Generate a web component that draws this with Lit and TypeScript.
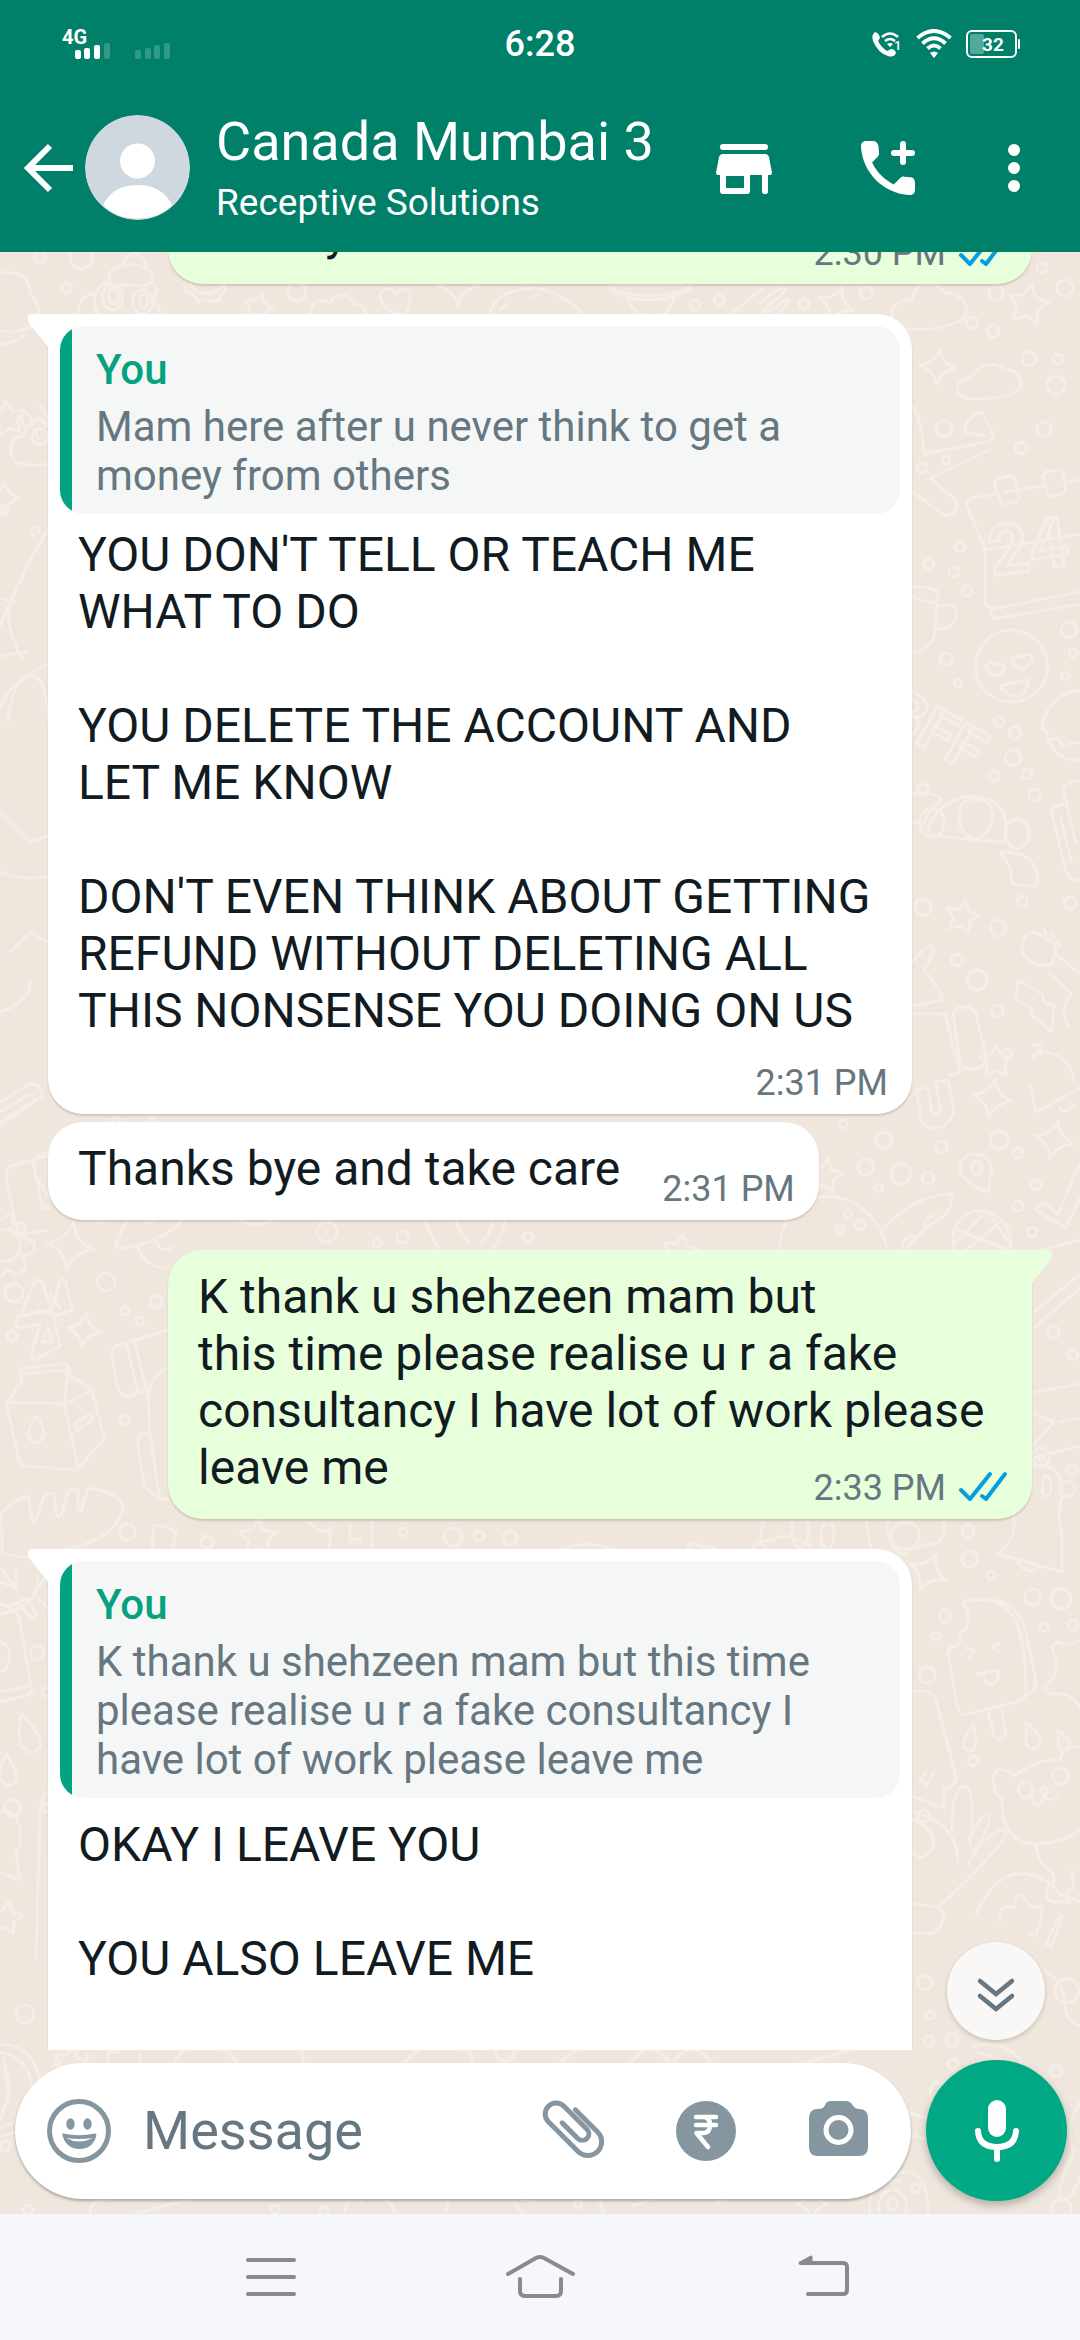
import { LitElement, html, svg, css, nothing } from "lit";
import { customElement, property } from "lit/decorators.js";
import { classMap } from "lit/directives/class-map.js";

interface Quote {
  author: string;
  text: string;
}

interface Message {
  text: string;
  out?: boolean;
  tail?: boolean;
  wide?: boolean;
  first?: boolean;
  time?: string;
  quote?: Quote;
  meta?: "inline" | "corner" | "below";
}

const MESSAGES: Message[] = [
  { text: "usually", out: true, wide: true, time: "2:30 PM", meta: "corner" },
  {
    text: "YOU DON'T TELL OR TEACH ME WHAT TO DO\n\nYOU DELETE THE ACCOUNT AND LET ME KNOW\n\nDON'T EVEN THINK ABOUT GETTING REFUND WITHOUT DELETING ALL THIS NONSENSE YOU DOING ON US",
    tail: true,
    wide: true,
    first: true,
    time: "2:31 PM",
    meta: "below",
    quote: { author: "You", text: "Mam here after u never think to get a money from others" },
  },
  { text: "Thanks bye and take care", time: "2:31 PM", meta: "inline" },
  {
    text: "K thank u shehzeen mam but\nthis time please realise u r a fake consultancy I have lot of work please leave me",
    out: true,
    tail: true,
    wide: true,
    first: true,
    time: "2:33 PM",
    meta: "corner",
  },
  {
    text: "OKAY I LEAVE YOU\n\nYOU ALSO LEAVE ME\n\n\n",
    tail: true,
    wide: true,
    first: true,
    quote: {
      author: "You",
      text: "K thank u shehzeen mam but this time please realise u r a fake consultancy I have lot of work please leave me",
    },
  },
];

/* Wallpaper: small rings as [x, y, r]; y is measured from the bottom of the header. */
const RINGS: number[][] = [
  [40, 5, 6], [81, 6, 11], [67, 36, 5], [297, 40, 9], [695, 53, 5], [719, 48, 5], [866, 41, 6], [804, 52, 5],
  [1042, 16, 5], [1065, 36, 8], [996, 41, 7], [972, 71, 6], [993, 79, 6], [1029, 107, 7], [1058, 107, 5],
  [1056, 133, 9], [944, 177, 8], [1044, 177, 7], [1021, 196, 6], [922, 216, 5], [946, 208, 4], [960, 295, 5],
  [929, 312, 5], [954, 320, 5], [967, 339, 5], [1069, 378, 8], [946, 407, 6], [1073, 401, 4], [958, 431, 4],
  [1065, 424, 4], [999, 470, 5], [1015, 481, 6], [1013, 506, 8], [994, 524, 5], [1027, 522, 5], [1035, 543, 6],
  [923, 537, 5], [1022, 649, 5], [923, 655, 8], [1070, 651, 6], [998, 676, 8], [957, 708, 6], [977, 728, 10],
  [997, 759, 6], [1007, 802, 5], [40, 185, 8], [3, 258, 5], [35, 279, 4], [843, 872, 4], [884, 888, 8],
  [999, 888, 9], [941, 895, 6], [866, 915, 8], [901, 922, 10], [928, 926, 6], [1018, 901, 5], [1036, 933, 5],
  [879, 936, 4], [1018, 954, 5], [848, 962, 4], [860, 973, 5], [840, 977, 4], [1032, 980, 5], [1053, 1080, 6],
  [1073, 1103, 5], [1072, 1218, 5], [1067, 1237, 8], [327, 980, 10], [403, 985, 6], [377, 991, 4], [528, 985, 5],
  [100, 966, 5], [106, 1030, 9], [14, 1041, 9], [156, 1050, 6], [125, 1059, 4], [140, 1069, 4], [12, 1084, 5],
  [125, 1168, 5], [127, 1280, 8], [207, 1290, 6], [403, 1280, 4], [453, 1285, 9], [479, 1284, 5], [510, 1286, 7],
  [968, 1279, 6], [970, 1307, 8], [991, 1323, 4], [37, 1401, 7], [46, 1440, 4], [46, 1556, 4], [1033, 1345, 8],
  [1061, 1347, 10], [945, 1364, 6], [936, 1384, 4], [1044, 1375, 4], [1073, 1373, 5], [927, 1423, 8],
  [973, 1509, 5], [924, 1564, 6], [925, 1731, 7], [1067, 1739, 12], [930, 1763, 4], [929, 1789, 5],
  [952, 1788, 6], [25, 1762, 9], [5, 1894, 5], [953, 1812, 5], [1056, 1819, 6], [578, 1952, 4], [1061, 1957, 10],
  [28, 1958, 5], [275, 1957, 4], [324, 1959, 4], [505, 1800, 9], [916, 1936, 4], [116, 869, 4], [152, 869, 4],
];

/* Four-pointed sparkles and five-pointed stars as [x, y, size, turn]. */
const SPARKS: number[][] = [
  [938, 115, 18, 5], [992, 846, 20, 10], [1054, 888, 20, 12], [70, 994, 24, 8], [84, 1078, 17, 8],
  [928, 1320, 20, 25], [458, 34, 20, 0], [4, 246, 16, 0], [812, 1952, 16, 0], [836, 52, 18, 20],
];
const STARS: number[][] = [
  [258, 56, 15, 15], [1028, 53, 21, 10], [962, 665, 17, 12], [258, 1286, 19, 0], [825, 924, 18, 10],
  [680, 1000, 18, 10], [8, 167, 18, -8], [6, 1666, 17, 10], [996, 810, 17, 0], [70, 1812, 18, 10],
];

const starPath = (r: number) => {
  const points: string[] = [];
  for (let i = 0; i < 10; i++) {
    const radius = i % 2 ? r * 0.52 : r;
    const a = (Math.PI / 5) * i - Math.PI / 2;
    points.push(`${(Math.cos(a) * radius).toFixed(1)} ${(Math.sin(a) * radius).toFixed(1)}`);
  }
  return `M${points.join("L")}Z`;
};

const sparkPath = (r: number) => {
  const q = r * 0.2;
  return `M0 ${-r}Q${q} ${-q} ${r} 0Q${q} ${q} 0 ${r}Q${-q} ${q} ${-r} 0Q${-q} ${-q} 0 ${-r}Z`;
};

const DOODLES: string[] = [
  // clouds
  "M0 21q30-4 30 20q14 16 6 30q-16 12-36 8",
  "M962 144c-10-6-2-20 10-18c4-14 24-18 32-8c14-2 22 14 14 20c-8 8-46 12-56 6z",
  "M900 76c-16-10-8-30 12-28c2-20 26-20 34-6c14-4 28 16 16 26q-30 14-62 8z",
  "M310 64c0-14 12-20 20-12c6-14 22-10 24 0c10 0 14 8 12 16",
  "M16 210c-10-12-4-26 8-26c2-20 22-20 30-8M16 210q16 6 32 2",
  // swirl character with two eyes
  "M122 14q4-10 12-14q12 6 12 16M122 14q12-4 24 2M112 34c-8-10 2-22 12-20M146 16c10 6 8 16-4 18q-20-2-34 0M98 62c-8-12-2-30 12-32M78 62c0-14 8-20 18-20M152 30q10 10-2 18q12 6 10 16",
  "M112 32a10 13 0 1 0 1 0zM113 36a5 8 0 1 0 1 0zM142 38a10 12 0 1 0 1 0zM143 42a4 7 0 1 0 1 0z",
  // gear
  "M184 32q4 14 8 8l6 10q8-4 14 0l8-2q0-8 6-8l-2-8M190 32q16 20 34 0",
  // heart, ringed planet, scribble
  "M380 42c6-8 14-6 16 0c6-8 16-6 14 4q0 10-6 18q-24-6-24-22z",
  "M609 33c10 14 70 14 82 0M612 38c14 14 66 12 78-2M628 48q8 18 24 18t22-20M614 32l70 0",
  "M732 62l30-26M760 52q14-14 22-16t-4 10q-16 12-14 14t18-10q10-6 4 4l-16 16",
  "M490 62q4-22 40-26q24 0 52 24M500 58l6-6M530 46l8-4",
  // brush and marker
  "M912 154q10 12 12 48l62-12q12-4 4-14l-8-16q-16 4-18 20l20 4M912 240l34 24q14-4 10-16l-26-22l60-28",
  // calendar
  "M1080 228l-14 2M1043 234l-38 6M995 242l-22 4q-8 4-6 8l18 42v54q2 8 12 6l83-16M985 298l95-16M992 354q-4 14 6 12l82-14",
  "M997 227l14-3q4 0 5 5l3 16q0 4-4 5l-10 2q-4 0-5-4l-5-16q-1-4 2-5zM1046 220l12-2q4 0 5 5l3 14q0 4-4 5l-10 2q-4 0-5-4l-4-14q-1-4 3-6z",
  // cup
  "M912 335q28 0 26 8l-4 42q-6 14-22 16M938 354q20-4 18 8q-2 18-20 14M912 344q16 8 24 6",
  // heart-eyed face
  "M1011 378a36 36 0 1 0 1 0zM986 414c4-6 8-4 8 0c4-4 12-2 10 4l-6 6q-10-2-12-10zM1012 408c4-6 8-4 10-2c4-6 12-4 10 2l-8 10q-10-2-12-10zM1000 434q16-4 28-6q0 14-10 16t-18-10z",
  // cookie
  "M1080 438q-32 4-38 38q8 4 6 14q6-6 12-2q2 10 10 4l10-2M1048 488q10 22 32 20",
  // group of people
  "M975 547q18 0 17 18t-17 22q-16-4-16-22t16-18zM932 556q12 2 12 14t-12 16q-12-4-12-16t12-14zM1017 567q12 2 12 14t-12 16q-12-4-12-16t12-14z",
  "M928 582c4-44 78-54 78-6q2 14-6 14l-66-6q-6 0-6-2zM912 542q26-2 30 6q-14 8-18 24l-12-2M1000 600q34-2 38 26q0 10-8 8l-18-2q0-20-12-32z",
  // paper clips
  "M1080 528q-18 2-16 12l12 52M1064 552q-14 2-12 10l14 58q8 12 14 6M1060 564l12 48",
  "M0 850l30-18q14 0 12 12l-42 30M0 860l26-16q8-4 8 4l-34 22",
  // toothbrush and spark
  "M1022 700q0-20 12-20q20 8 22 18l-4 14q-20 6-30-12zM1056 702l24 20M1048 720l24 22q-14 14-4 32M1044 676l2 6M1052 680l2 6M1056 690l4 4",
  "M1018 728l24 14l2 8l10 4l-2 26l-22-18l2-6l-16-8z",
  // bottle and tag
  "M958 756q14-4 18 6l10 42q0 12-8 12q-14 4-18-6l-6-42q-2-10 4-12zM912 710q10-12 18-16q8 2-6 24q16 18 18 30l-30 6M912 762h30q4 0 4 4l14 54l-12 4",
  // upper right bell
  "M1040 802q2-14-6-8M1034 808q-2-10 10-8q28 4 30 30M1030 832l6 28l44-24M1060 856q6 8 14-4",
  // magnet
  "M916 838l12-2l4 24q6 4 8-2l-4-28l12-2l6 30q-4 18-20 18q-16 0-14-18z",
  // pin
  "M966 928c-12-12-4-26 8-26c16 0 20 12 16 24l-2 14q-14-4-22-12zM976 910a5 6 0 1 0 1 0z",
  // tick
  "M1036 958l4-6q4-2 6 0l12 10l22-50M1036 958l30 18l14-30",
  // ball
  "M954 998c-10-52 60-52 57 0M982 964l-28 28M990 962l20 30M958 978l50 20M1000 970l-34 28",
  // half biscuit and carrot
  "M779 998c4-70 90-72 108-2M880 982q30-38 70-40q6 2-4 20q-30 20-40 36M902 998q0-14 12-14M926 974q-4-8 6-10",
  // plane
  "M116 990l18-36M116 990q0 8 8 6q40-6 60-30l44-24M146 966l24-10q6-2 4 4l-22 10q-8 2-6-4zM138 996q8 20 30 20M156 988q4 16 18 6M228 954q10 20 32 18q24-4 28-22M200 946l28-8",
  // heart badge
  "M424 950q0 30 20 52M504 950q4 30-12 48M456 968c2-14 14-14 18-6c4-12 20-10 20 4q-2 14-12 24M456 968q2 10 12 22",
  // envelope and gear at the left edge
  "M48 904l-38 10q-4 4-4 12l10 48q2 10 10 8l22-4M48 900q-16 4-14 14l8 40q2 4 6 2M36 924l12 20",
  "M0 968l10-6l4 10q10-4 12 4l-4 8l12 6q2 10-4 12l-8 2l4 12q-8 10-14 4l-6-2l-4 6M2 978a14 16 0 1 1-1 30",
  // scissors
  "M34 1030q4-4 8 0l10 28l8-30q6-2 6 4l6 26l-18 6l-14-6l-14 6l-4-4zM20 1064l32-6l8 36l-26 14q-4-4-2-8l8-28l-22 4q-6-6 2-12zM50 1042l10 14M42 1090l6-14l4 14z",
  // milk carton
  "M20 1122q-2-6 4-6l40-4q6 0 6 8M20 1122l46-4l2 4l24 16l-26 14l-58-2l14-22zM6 1150l12 54q2 10 8 10l48 4q4 0 4-4l-14-62M92 1138l12 48q0 4-4 6l-24 26M68 1122l-4 30M36 1164q-8 12-8 20q8 14 16 0q0-10-8-20zM76 1170l14-8q4 0 2 6l-14 10q-4 0-2-8z",
  // bag
  "M168 1078l-52 16q-6 4-4 10l6 32q4 10 12 8l18-6M126 1090l12 50M134 1088l12 48M148 1142q4-20 20-26M148 1142l2 40l10 66M150 1182q-14-2-12 12l6 36q6 16 24 18",
  // bread
  "M2 1280q-10-24 26-36l4 24q2 8 4 0l8-24q6-4 10-2l2 20q4 6 6-2l6-20q6-4 10-2v18q4 6 4 0l6-20q40 6 34 24q-10 32-76 42q-30 6-44-2z",
  // glass and puzzle piece
  "M154 1274q10-2 22 6l-8 40M154 1274l-4 44M310 1270q10 14 20 6v16l-6 18M350 1274v16q12-8 10 2M372 1270v32l-26 6",
  // paws
  "M764 1270q-8 22 4 28M792 1270q0 24 8 26q12-8 8-26M824 1272q-8 18 4 26q10-10 4-26M745 1308q8-20 28-20q16-10 36 6M686 1300q4-14 14-6l14 2q2 12-6 14M552 1302q32-18 70-2",
  // small camera
  "M888 1270q0 34 20 32M944 1270q2 18-10 22l-34 6M905 1270a14 14 0 1 0 1 0M866 1270l8 40",
  // right side ruler and lines
  "M1034 1060l46-38M1034 1076l46-40M1034 1140l46-8M1034 1162l20 8l-20 22M1060 1170l20-4M1034 1206l46-12M1034 1000l46-12",
  // bell
  "M1040 1196a9 9 0 1 0 1 0M1040 1202a3 3 0 1 0 1 0M1026 1216q36-12 36 28q-6 20 0 40v36l-64-18q18-14 16-34t12-52zM1044 1224q10 0 6 18q-6 6-8-2zM1018 1310q8 14 20 6",
  // leaf
  "M0 1316l16 20l-12-16M16 1336l0-18M16 1336l-16-6M8 1354l20-8M28 1346l8 16q0 6-6 2l-12-12M0 1362q40-8 38-36M48 1322l-14 20l14 14",
  // oven mitt
  "M0 1352q20 4 20 20l12 66q-2 6-8 6l-24 6M0 1390q10 4 10 14q-2 14-10 16M0 1440l30-6",
  // drops
  "M22 1462q22 24 18 34q-10 10-20-4q-2-18 2-30zM7 1502q12 20 8 28q-8 8-16-4q0-14 8-24z",
  "M974 1472q-12 14-10 24q10 6 12-4zM1026 1470q16 14 14 22q-8 10-14 0zM1058 1478q14 12 12 18q-6 8-12-2zM22 157q12 8 10 16q-8 6-10-4z",
  // duck
  "M12 1548a8 8 0 1 0 1 0M0 1560q14-6 20 16q2 16-4 26l4 26l-20-8M48 1540q-8 6-8 20l-4 148",
  // ice lolly
  "M964 1352q-2-4 4-4q34-4 46 18t12 74q0 8-10 10l-48 12q-8 2-10-6l-10-54q0-8 8-8q6-6 4-14q8-2 8-12t-4-16zM996 1348q22 4 30 32l10 48q0 12-12 16M988 1461l6 22q4 8 12 0l-4-26M966 1396l10 2l-8 8M1000 1390l-8 6l8 4M976 1422l24-4M984 1420q0 14 8 12t6-14",
  // box character
  "M912 1440q20-4 24 8l20 76q0 12-12 12v20l-32-12M920 1526l6 6M926 1520l-6 12M934 1520l-8 14",
  // splash
  "M1080 1388q-14 8-22 2q-8 2-4 12q6 12-2 26q-14 10 0 14q20-2 28 14",
  // kitten
  "M1014 1524c-6-8-24-12-20 8q2 12 8 14q-2 42 30 46q30 0 48-14M1014 1524q24-18 46-16q4-18 20-12M1025 1530a7 8 0 1 0 1 0zM1060 1516a8 8 0 1 0 1 0zM1040 1538q8-6 8 2l-4 4zM1044 1544q-4 16-12 4M1044 1544q8 8 14-2M1036 1594q2 18 16 26q6 10-4 14q-6 14 6 16h16q-10-10 4-14l-2-18",
  // carrot greens
  "M912 1560q44 8 46 50M952 1578q0-44 12-44t6 60M968 1588q14-28 20-24t-20 48M972 1600q28-28 34-20q2 10-66 74M912 1652l20 2q16 2 10 16q-2 16-30 10M912 1568q20 6 22 24q-10 22-22 8",
  // cap and badge
  "M976 1662q20-44 50-40q24 4 34 20l20 8M1000 1670q-2-20 14-14q2-20 12-8q4 10 16 6q0 14-4 20q0 14-10 8M1058 1666l4-2l-10 30l-6-2zM1046 1720q18 8 20 40q4 12 14 14",
  // compass
  "M0 1792q38 2 40 44t-40 48M0 1800q30 6 32 36t-32 40M4 1806l6 34l-10 28M4 1818l4 22",
  // strip between the list and the composer
  "M54 1812l26 14l8-24M108 1812v-12h10M140 1812v-10M174 1812q8-16 20-18M222 1798q8 0 14 12M304 1812q-4-10 0-16M402 1812l16-14M462 1798q12 0 10 14M560 1812q14-20 40-16M630 1812q20-30 40 0M672 1812q20-30 40 0M800 1812l80-22",
  // under the composer
  "M90 1962q0-12 12-14l90-12q14 0 12 8l-70 18M344 1962l8-24M368 1940l-8 10M380 1946q14 4 14 16M446 1960q4-16 0-24M524 1962l-16-18l26 6M604 1962q-4-14-8-24M632 1954l40-14M716 1950l50-12M870 1962q-4-34 30-34M892 1938a14 16 0 1 0 1 0M892 1946a5 6 0 1 0 1 0M928 1962q0-40-20-42q-22 2-22 8",
  // far right near the microphone
  "M974 1794q30-8 48 16M978 1800l40 14M908 1860l30 10M930 1846q0-20 12-14q14-10 14 20M1080 1850q-16 26-6 50q-20 40-12 48q12-2 18-24M904 1884q24 0 28 8",
  // left side at the first message
  "M0 92q20-2 24-10M38 186l-4-8M40 152l8 14M42 170l8 6M0 374q30-70 48-96M0 346l14 4M12 350q-10 20 10 56M0 404l26-4M8 470q4-46 24-46q14 0 16 46M0 456q8-26 48-44M0 560l30 30l18-6M0 620q26 10 48 4M10 700l20-20l18 10M0 760q30-10 30-30",
];

@customElement("chat-wallpaper")
export class ChatWallpaper extends LitElement {
  static styles = css`
    :host { display: block; overflow: hidden; background: #efe6dd; }
    .art { display: block; width: 100%; height: 100%; }
    .lines { fill: none; stroke: #f5eee7; stroke-width: 3; stroke-linejoin: round; stroke-linecap: round; }
    .word { font-family: Roboto, sans-serif; font-weight: 700; }
  `;

  render() {
    return html`
      <svg class="art" viewBox="0 0 1080 1962" preserveAspectRatio="xMidYMin slice" aria-hidden="true">
        <g class="lines">
          ${RINGS.map(([x, y, r]) => svg`<circle cx=${x} cy=${y} r=${r} />`)}
          ${SPARKS.map(([x, y, r, t]) => svg`<path d=${sparkPath(r)} transform="translate(${x} ${y}) rotate(${t})" />`)}
          ${STARS.map(([x, y, r, t]) => svg`<path d=${starPath(r)} transform="translate(${x} ${y}) rotate(${t})" />`)}
          ${DOODLES.map((d) => svg`<path d=${d} />`)}
          <text class="word" font-size="70" transform="translate(992 324) rotate(-8)">24</text>
          <text class="word" font-size="60" transform="translate(880 470) rotate(30)">BFF</text>
        </g>
      </svg>
    `;
  }
}

@customElement("status-bar")
export class StatusBar extends LitElement {
  static styles = css`
    :host {
      display: grid;
      grid-template-columns: 1fr auto 1fr;
      align-items: center;
      height: 87px;
      padding: 0 60px;
      color: #fff;
    }
    .time { font-size: 36px; line-height: 42px; font-weight: 500; }
    .right { display: flex; justify-content: flex-end; align-items: center; gap: 14px; }
    svg { display: block; }
    .net { font: 700 20px Roboto, sans-serif; fill: #fff; }
    .charge { font: 700 19px Roboto, sans-serif; fill: #fff; }
    .sim { font: 500 13px Roboto, sans-serif; fill: #fff; }
  `;

  render() {
    return html`
      <svg width="120" height="36" viewBox="0 0 120 36" fill="#fff" role="img" aria-label="4G signal">
        <text class="net" x="2" y="18">4G</text>
        <rect x="15" y="24" width="6" height="9" rx="2" />
        <rect x="24" y="22" width="6" height="11" rx="2" />
        <rect x="34" y="19" width="6" height="14" rx="2" />
        <g opacity=".2">
          <rect x="44" y="17" width="6" height="16" rx="2" />
          <rect x="75" y="24" width="6" height="9" rx="2" />
          <rect x="85" y="22" width="6" height="11" rx="2" />
          <rect x="94" y="19" width="6" height="14" rx="2" />
          <rect x="104" y="17" width="6" height="16" rx="2" />
        </g>
      </svg>
      <span class="time">6:28</span>
      <div class="right">
        <svg width="32" height="30" viewBox="0 0 32 30" aria-hidden="true">
          <path d="M5 3Q1 6 3 12Q8 24 18 27Q24 29 26 24Q25 20 21 20L17 22Q11 18 8 12L10 9Q9 4 5 3Z" fill="#fff" />
          <path d="M12 8Q20 1 28 8M15 12Q20 8 25 12" fill="none" stroke="#fff" stroke-width="2.6" />
          <path d="M17 15Q20 13 23 15L20 18Z" fill="#fff" />
          <text class="sim" x="24" y="21">1</text>
        </svg>
        <svg width="36" height="30" viewBox="0 0 36 30" aria-hidden="true" fill="none" stroke="#fff" stroke-width="4">
          <path d="M1.500 9Q18-5 34.500 9" />
          <path d="M6.500 14.500Q18 4 29.500 14.500" />
          <path d="M11.500 19.500Q18 13.500 24.500 19.500" />
          <path d="M14 24Q18 21 22 24L18 29Z" fill="#fff" stroke="none" />
        </svg>
        <svg width="54" height="28" viewBox="0 0 54 28" role="img" aria-label="Battery 32 percent">
          <rect x="1" y="1" width="49" height="26" rx="5" fill="none" stroke="#fff" stroke-width="2" />
          <rect x="4" y="4" width="14" height="20" rx="2" fill="#fff" opacity=".32" />
          <rect x="52" y="9" width="2" height="10" rx="1" fill="#fff" />
          <text class="charge" x="16" y="21">32</text>
        </svg>
      </div>
    `;
  }
}

@customElement("chat-header")
export class ChatHeader extends LitElement {
  static styles = css`
    :host { display: flex; align-items: center; box-sizing: border-box; height: 165px; padding: 0 48px 4px 24px; color: #fff; }
    button { display: block; padding: 0; border: 0; background: none; color: inherit; }
    svg { display: block; fill: currentColor; }
    .avatar { margin: 0 26px 0 11px; border-radius: 50%; }
    .who { flex: 1; min-width: 0; display: flex; flex-direction: column; gap: 7px; }
    .name { margin: 0; font-size: 54px; line-height: 64px; font-weight: 400; white-space: nowrap; }
    .sub { margin: 0; font-size: 37px; line-height: 44px; white-space: nowrap; }
    .actions { display: flex; align-items: center; gap: 72px; }
  `;

  render() {
    return html`
      <button aria-label="Back">
        <svg width="50" height="54" viewBox="0 0 50 54">
          <path d="M26 5L4 27L26 49M4 27H49" fill="none" stroke="currentColor" stroke-width="6" />
        </svg>
      </button>
      <svg class="avatar" width="105" height="105" viewBox="0 0 105 105" role="img" aria-label="Profile photo">
        <circle cx="52.500" cy="52.500" r="52.500" fill="#cfd8df" />
        <circle cx="52.500" cy="46" r="17.500" />
        <path d="M18 90Q28 70 52.500 70T87 90Q74 103.500 52.500 103.500T18 90Z" />
      </svg>
      <div class="who">
        <h1 class="name">Canada Mumbai 3</h1>
        <p class="sub">Receptive Solutions</p>
      </div>
      <div class="actions">
        <button aria-label="Catalog">
          <svg width="72" height="72" viewBox="0 0 72 72">
            <rect x="12" y="12" width="48" height="6" rx="3" />
            <path fill-rule="evenodd" d="M15 22H57Q60 22 61 25L64 41Q64 43 62 43H60V60Q60 62 57 62T54 60V43H42V59Q42 62 39 62H15Q12 62 12 59V43H10Q8 43 8 41L11 25Q12 22 15 22ZM18 44V56H36V44Z" />
          </svg>
        </button>
        <button aria-label="Call">
          <svg width="72" height="72" viewBox="0 0 24 24">
            <path d="M19.600 15.100L17.400 14.900C16.900 14.800 16.400 15 16 15.400L13.900 17.500C10.800 15.900 8.200 13.400 6.700 10.200L8.500 8.300C8.900 7.900 9.100 7.400 9 6.900L8.800 4.700C8.700 3.700 7.900 3 6.900 3H4.600C3.700 3 3 3.800 3 4.800C3.500 13.600 10.500 20.500 19.200 21C20.200 21 21 20.300 21 19.300V17C21 16 20.500 15.200 19.600 15.100Z" />
            <path d="M17 4V10M14 7H20" fill="none" stroke="currentColor" stroke-width="2" stroke-linecap="round" />
          </svg>
        </button>
        <button aria-label="More options">
          <svg width="36" height="72" viewBox="0 0 36 72">
            <circle cx="18" cy="18" r="6" />
            <circle cx="18" cy="36" r="6" />
            <circle cx="18" cy="54" r="6" />
          </svg>
        </button>
      </div>
    `;
  }
}

@customElement("message-bubble")
export class MessageBubble extends LitElement {
  @property({ attribute: false }) message!: Message;

  static styles = css`
    :host { display: flex; flex: none; }
    .bubble {
      position: relative;
      box-sizing: border-box;
      display: flex;
      flex-direction: column;
      max-width: 864px;
      border-radius: 35px;
      background: #fff;
      color: #111b21;
      box-shadow: 0 2px 2px rgba(90, 70, 50, 0.2);
    }
    .wide { width: 864px; }
    .out { margin-left: auto; background: #e7ffdb; }
    .tail-in { border-top-left-radius: 0; }
    .tail-out { border-top-right-radius: 0; }
    .tail { position: absolute; top: 0; width: 22px; height: 35px; }
    .tail-in .tail { right: 100%; margin-right: -1px; fill: #fff; }
    .tail-out .tail { left: 100%; margin-left: -1px; fill: #e7ffdb; transform: scaleX(-1); }
    .quote {
      display: flex;
      flex-direction: column;
      gap: 8px;
      margin: 12px 12px 0;
      padding: 19px 24px 14px 36px;
      border-radius: 24px;
      background: linear-gradient(to right, #02a380 12px, #f4f7f6 12px);
      color: #667781;
      font-size: 42px;
      line-height: 49px;
    }
    .quote p { margin: 0; }
    .quote .author { color: #06a17f; font-weight: 500; }
    .body { display: grid; padding: 18px 32px 23px 30px; }
    .quote + .body { padding-top: 12px; }
    .quote + .open { padding-top: 18px; }
    .text { margin: 0; font-size: 48px; line-height: 57px; white-space: pre-wrap; }
    .meta {
      display: flex;
      align-items: center;
      gap: 12px;
      align-self: end;
      justify-self: end;
      margin: 0 -8px -13px 0;
      color: #667781;
      font-size: 36px;
      line-height: 42px;
      white-space: nowrap;
    }
    .ticks { display: block; }
    .inline { grid-template-columns: auto auto; column-gap: 42px; }
    .corner .text, .corner .meta { grid-area: 1 / 1; }
    .below { row-gap: 23px; }
  `;

  render() {
    const m = this.message;
    const bubble = {
      bubble: true,
      wide: !!m.wide,
      out: !!m.out,
      "tail-in": !!m.tail && !m.out,
      "tail-out": !!m.tail && !!m.out,
    };
    return html`
      <article class=${classMap(bubble)}>
        ${m.tail
          ? html`<svg class="tail" viewBox="0 0 22 35" aria-hidden="true"><path d="M6 0H22V34L2 9Q-2 0 6 0Z" /></svg>`
          : nothing}
        ${m.quote
          ? html`<div class="quote">
              <p class="author">${m.quote.author}</p>
              <p>${m.quote.text}</p>
            </div>`
          : nothing}
        <div class="body ${m.meta ?? "open"}">
          <p class="text">${m.text}</p>
          ${m.time
            ? html`<div class="meta">
                <time>${m.time}</time>
                ${m.out
                  ? html`<svg class="ticks" width="50" height="34" viewBox="0 0 50 34" role="img" aria-label="Read" fill="none" stroke="#069dde" stroke-width="4" stroke-linecap="round" stroke-linejoin="round">
                      <path d="M3 19L12 28L32 3" />
                      <path d="M24 25L28 28L47 3" />
                    </svg>`
                  : nothing}
              </div>`
            : nothing}
        </div>
      </article>
    `;
  }
}

@customElement("message-composer")
export class MessageComposer extends LitElement {
  static styles = css`
    :host { display: flex; align-items: center; gap: 15px; padding: 10px 13px 13px 15px; }
    .field {
      flex: 1;
      min-width: 0;
      display: flex;
      align-items: center;
      box-sizing: border-box;
      height: 136px;
      padding: 0 37px 0 28px;
      border-radius: 68px;
      background: #fff;
      box-shadow: 0 2px 3px rgba(0, 0, 0, 0.28);
      color: #8696a0;
    }
    .input {
      flex: 1;
      min-width: 0;
      height: 72px;
      margin: 0 28px;
      padding: 0;
      border: 0;
      outline: 0;
      background: none;
      color: #111b21;
      font: 400 54px Roboto, sans-serif;
    }
    .input::placeholder { color: #667781; opacity: 1; }
    .tools { display: flex; gap: 60px; }
    button { display: block; padding: 0; border: 0; background: none; color: inherit; }
    svg { display: block; fill: currentColor; }
    .mic {
      display: grid;
      place-items: center;
      width: 141px;
      height: 141px;
      border-radius: 50%;
      background: #00a884;
      color: #fff;
      box-shadow: 0 4px 8px rgba(0, 0, 0, 0.25);
    }
  `;

  render() {
    return html`
      <div class="field">
        <button aria-label="Emoji">
          <svg width="72" height="72" viewBox="0 0 72 72">
            <circle cx="36" cy="36" r="29.500" fill="none" stroke="currentColor" stroke-width="5" />
            <ellipse cx="27.500" cy="29" rx="4.200" ry="5.800" />
            <ellipse cx="44.500" cy="29" rx="4.200" ry="5.800" />
            <path fill-rule="evenodd" d="M20 38.500Q36 42 52 38.500Q54 38.500 53 42Q49 54 36.500 54T20 42Q18.500 38.500 20 38.500ZM23 43Q36 50 50 43Q36 45 23 43Z" />
          </svg>
        </button>
        <input class="input" type="text" aria-label="Message" placeholder="Message" />
        <div class="tools">
          <button aria-label="Attach">
            <svg width="72" height="72" viewBox="0 0 72 72">
              <path transform="translate(38 36) rotate(-45)" d="M14.500-15.500V16A13.750 13.750 0 0 1-13 16V-26A11 11 0 0 1 9-26V6.500A6.500 6.500 0 0 1-4 6.500V-15.500" fill="none" stroke="currentColor" stroke-width="5" stroke-linecap="round" />
            </svg>
          </button>
          <button aria-label="Payment">
            <svg width="72" height="72" viewBox="0 0 72 72">
              <circle cx="36" cy="36" r="30" />
              <path d="M26 22H46M26 30H46M26 22H33Q40 22 40 30T33 38H26.500L38 52" fill="none" stroke="#fff" stroke-width="4.500" stroke-linecap="round" stroke-linejoin="round" />
            </svg>
          </button>
          <button aria-label="Camera">
            <svg width="72" height="72" viewBox="0 0 72 72">
              <path d="M29 6H44Q47 6 49 8L52 12Q54 14 57 14Q66 14 66 23V52Q66 61 57 61H16Q7 61 7 52V23Q7 14 16 14Q20 14 22 12L24 8Q26 6 29 6Z" />
              <circle cx="36.500" cy="35" r="12.500" fill="none" stroke="#fff" stroke-width="5" />
            </svg>
          </button>
        </div>
      </div>
      <button class="mic" aria-label="Voice message">
        <svg width="72" height="72" viewBox="0 0 72 72">
          <rect x="27" y="5" width="18" height="37" rx="9" />
          <path d="M17 36Q18 52 36 52T55 36M36 52V64" fill="none" stroke="currentColor" stroke-width="6" stroke-linecap="round" />
        </svg>
      </button>
    `;
  }
}

@customElement("system-nav")
export class SystemNav extends LitElement {
  static styles = css`
    :host {
      display: grid;
      grid-template-columns: repeat(3, 1fr);
      align-items: center;
      justify-items: center;
      height: 126px;
      padding: 0 12.5%;
      background: #f6f7fa;
      color: #8a8a8a;
    }
    button { display: block; padding: 0; border: 0; background: none; color: inherit; }
    svg { display: block; fill: none; stroke: currentColor; stroke-width: 4; stroke-linecap: round; stroke-linejoin: round; }
  `;

  render() {
    return html`
      <button aria-label="Recent apps">
        <svg width="84" height="48" viewBox="0 0 84 48"><path d="M20 7H66M20 24H66M20 41H66" /></svg>
      </button>
      <button aria-label="Home">
        <svg width="84" height="48" viewBox="0 0 84 48">
          <path d="M10 21L38 5Q42 3 46 5L75 21M22 26V38Q22 43 27 43H58Q63 43 63 38V26" />
        </svg>
      </button>
      <button aria-label="Go back">
        <svg width="84" height="48" viewBox="0 0 84 48">
          <path d="M33 10H75Q79 10 79 14V37Q79 41 75 41H40" />
          <path d="M32 10L43 4V10Z" fill="currentColor" stroke-width="3" />
        </svg>
      </button>
    `;
  }
}

@customElement("app-root")
export class AppRoot extends LitElement {
  static styles = css`
    :host {
      display: flex;
      flex-direction: column;
      height: 100vh;
      overflow: hidden;
      font-family: Roboto, sans-serif;
    }
    .top { flex: none; background: #008069; }
    .chat { position: relative; flex: 1; min-height: 0; display: flex; flex-direction: column; }
    .wallpaper { position: absolute; inset: 0; }
    .pane { position: relative; flex: 1; min-height: 0; overflow: hidden; }
    .list { display: flex; flex-direction: column; gap: 8px; margin-top: -66px; padding: 0 48px; }
    .first { margin-top: 22px; }
    .composer { position: relative; flex: none; }
    .jump {
      position: absolute;
      right: 35px;
      bottom: 10px;
      display: grid;
      place-items: center;
      width: 98px;
      height: 98px;
      padding: 0;
      border: 0;
      border-radius: 50%;
      background: #f9f8f7;
      box-shadow: 0 2px 4px rgba(60, 40, 20, 0.2);
    }
    .nav { flex: none; }
  `;

  render() {
    return html`
      <header class="top">
        <status-bar></status-bar>
        <chat-header></chat-header>
      </header>
      <main class="chat">
        <chat-wallpaper class="wallpaper"></chat-wallpaper>
        <section class="pane" aria-label="Messages">
          <div class="list">
            ${MESSAGES.map(
              (m) => html`<message-bubble class=${classMap({ first: !!m.first })} .message=${m}></message-bubble>`,
            )}
          </div>
          <button class="jump" aria-label="Scroll to latest">
            <svg width="48" height="48" viewBox="0 0 48 48" fill="none" stroke="#667781" stroke-width="4.500" stroke-linecap="round">
              <path d="M8 14L24 27L40 14M8 29L24 42L40 29" />
            </svg>
          </button>
        </section>
        <message-composer class="composer"></message-composer>
      </main>
      <system-nav class="nav"></system-nav>
    `;
  }
}
